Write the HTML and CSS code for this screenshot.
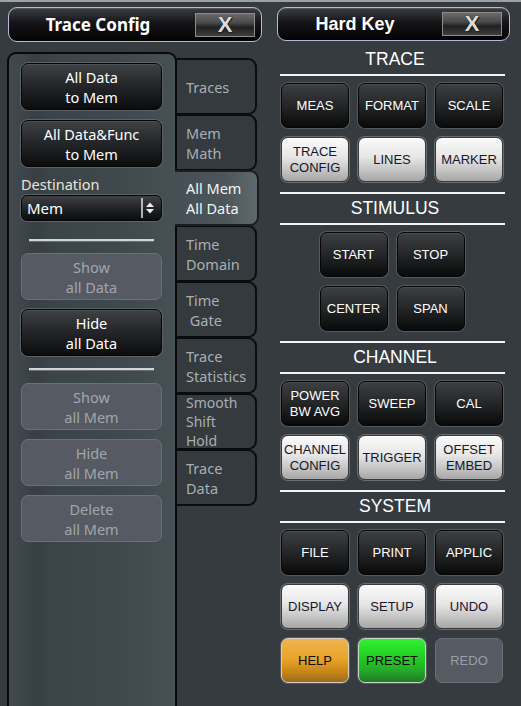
FILE: index.html
```html
<!DOCTYPE html>
<html>
<head>
<meta charset="utf-8">
<link rel="stylesheet" href="styles.css">
</head>
<body>
<div class="app">
  <div class="left">
    <div class="titlebar tb-left">
      <span class="title title-left">Trace Config</span>
      <span class="close">X</span>
    </div>
    <div class="lbody">
      <div class="panel">
        <div class="pbtn">All Data<br>to Mem</div>
        <div class="pbtn gap10">All Data&amp;Func<br>to Mem</div>
        <div class="label">Destination</div>
        <div class="select">
          <span class="sel-val">Mem</span>
          <svg class="sel-arrows" width="18" height="22" viewBox="0 0 18 22">
            <line x1="1" y1="1" x2="1" y2="21" stroke="#e4e4e4" stroke-width="1.5"/>
            <path d="M5 10 L9 5.5 L13 10 Z" fill="#ececec"/>
            <path d="M5 12 L9 16.5 L13 12 Z" fill="#ececec"/>
          </svg>
        </div>
        <div class="sep sep1"></div>
        <div class="pbtn disabled gap12">Show<br>all Data</div>
        <div class="pbtn gap9">Hide<br>all Data</div>
        <div class="sep sep2"></div>
        <div class="pbtn disabled gap13">Show<br>all Mem</div>
        <div class="pbtn disabled gap9">Hide<br>all Mem</div>
        <div class="pbtn disabled gap9">Delete<br>all Mem</div>
      </div>
      <div class="tabs">
        <div class="tab">Traces</div>
        <div class="tab">Mem<br>Math</div>
        <div class="tab selected">All Mem<br>All Data</div>
        <div class="tab">Time<br>Domain</div>
        <div class="tab">Time<br>&nbsp;Gate</div>
        <div class="tab">Trace<br>Statistics</div>
        <div class="tab three">Smooth<br>Shift<br>Hold</div>
        <div class="tab">Trace<br>Data</div>
      </div>
    </div>
  </div>

  <div class="right">
    <div class="titlebar tb-right">
      <span class="title title-right">Hard Key</span>
      <span class="close close-right">X</span>
    </div>

    <div class="heading first">TRACE</div>
    <div class="rule"></div>
    <div class="grid g3">
      <div class="key dark">MEAS</div>
      <div class="key dark">FORMAT</div>
      <div class="key dark">SCALE</div>
      <div class="key light">TRACE<br>CONFIG</div>
      <div class="key light">LINES</div>
      <div class="key light">MARKER</div>
    </div>

    <div class="rule"></div>
    <div class="heading">STIMULUS</div>
    <div class="rule"></div>
    <div class="grid g2">
      <div class="key dark">START</div>
      <div class="key dark">STOP</div>
      <div class="key dark">CENTER</div>
      <div class="key dark">SPAN</div>
    </div>

    <div class="rule"></div>
    <div class="heading">CHANNEL</div>
    <div class="rule"></div>
    <div class="grid g3">
      <div class="key dark">POWER<br>BW AVG</div>
      <div class="key dark">SWEEP</div>
      <div class="key dark">CAL</div>
      <div class="key light">CHANNEL<br>CONFIG</div>
      <div class="key light">TRIGGER</div>
      <div class="key light">OFFSET<br>EMBED</div>
    </div>

    <div class="rule"></div>
    <div class="heading">SYSTEM</div>
    <div class="rule"></div>
    <div class="grid g3">
      <div class="key dark">FILE</div>
      <div class="key dark">PRINT</div>
      <div class="key dark">APPLIC</div>
      <div class="key light">DISPLAY</div>
      <div class="key light">SETUP</div>
      <div class="key light">UNDO</div>
      <div class="key help">HELP</div>
      <div class="key preset">PRESET</div>
      <div class="key off">REDO</div>
    </div>
  </div>
</div>
</body>
</html>
```

FILE: styles.css
```css
html, body {
  margin: 0;
  padding: 0;
}

body {
  width: 521px;
  height: 706px;
  overflow: hidden;
  background: #363b40;
  font-family: "Liberation Sans", Arial, sans-serif;
}

.app {
  display: flex;
  border-top: 2px solid #9ea2a6;
  height: 704px;
  box-sizing: border-box;
}

/* ---------- title bars ---------- */
.titlebar {
  display: flex;
  align-items: center;
  box-sizing: border-box;
  margin-top: 5px;
  border: 1px solid #b8b8dc;
  border-radius: 9px;
  background: linear-gradient(#3c3e43 0%, #151518 45%, #020202 100%);
  box-shadow: inset 0 1px 0 rgba(255,255,255,0.12);
}

.tb-left {
  margin-left: 8px;
  width: 254px;
  height: 35px;
}

.tb-right {
  width: 233px;
  height: 34px;
}

.title {
  flex: 1;
  text-align: center;
  color: #ffffff;
  font-weight: bold;
}

.title-left {
  font-family: "Noto Sans", "Open Sans", sans-serif;
  font-size: 17px;
  padding-right: 8px;
}

.title-right {
  font-family: "Liberation Sans", Arial, sans-serif;
  font-size: 18px;
  padding-right: 10px;
}

.close {
  width: 60px;
  height: 24px;
  margin-right: 6px;
  box-sizing: border-box;
  border: 1px solid #8c8c8c;
  background: linear-gradient(#6a6a6a 0%, #4a4a4a 40%, #202020 60%, #3e3e3e 100%);
  color: #dcdcdc;
  font: bold 22px/22px "Liberation Sans", Arial, sans-serif;
  text-align: center;
  text-shadow: 0 0 1px #000, 1px 1px 0 #222;
}

.close-right {
  margin-right: 7px;
}

/* ---------- left side ---------- */
.left {
  width: 277px;
  flex: none;
}

.lbody {
  display: flex;
  margin-top: 10px;
  margin-left: 7px;
  height: 660px;
}

.panel {
  width: 170px;
  box-sizing: border-box;
  border: 2px solid #07090a;
  border-bottom: none;
  border-radius: 9px 9px 0 0;
  padding: 9px 0 0 12px;
  background: linear-gradient(90deg, #414a4e 0%, #3d454a 9%, #373f45 15%, #3b4449 26%, #3f484c 65%, #465055 100%);
  font-family: "Noto Sans", "Open Sans", sans-serif;
  position: relative;
  z-index: 1;
}

.pbtn {
  width: 141px;
  height: 47px;
  box-sizing: border-box;
  border: 1px solid #060606;
  border-radius: 7px;
  box-shadow: 0 0 0 1px #5c6266, inset 0 1px 0 rgba(255,255,255,0.08);
  background: linear-gradient(#3f4245 0%, #25272a 45%, #0c0c0d 100%);
  color: #ffffff;
  font-size: 14.5px;
  line-height: 20px;
  display: flex;
  align-items: center;
  justify-content: center;
  text-align: center;
}

.pbtn.disabled {
  background: #565a63;
  border: 1px solid #6b6f77;
  box-shadow: none;
  color: #a2a6ac;
}

.gap9 { margin-top: 9px; }
.gap10 { margin-top: 10px; }
.gap12 { margin-top: 12px; }
.gap13 { margin-top: 13px; }

.label {
  margin-top: 6px;
  height: 22px;
  line-height: 22px;
  color: #ece6d6;
  font-size: 14.5px;
}

.select {
  width: 141px;
  height: 26px;
  box-sizing: border-box;
  border: 1px solid #060606;
  border-radius: 6px;
  box-shadow: 0 0 0 1px #5c6266;
  background: linear-gradient(#3f4245 0%, #222427 50%, #0c0c0d 100%);
  display: flex;
  align-items: center;
  color: #ffffff;
  font-size: 15px;
}

.sel-val {
  flex: 1;
  padding-left: 5px;
}

.sel-arrows {
  margin-right: 2px;
}

.sep {
  width: 125px;
  height: 2px;
  margin-left: 8px;
  background: #d2d4d6;
  box-shadow: 0 1px 0 #6a6e72;
}

.sep1 { margin-top: 18px; }
.sep2 { margin-top: 12px; }

.tabs {
  width: 84px;
  padding-top: 6px;
  font-family: "Noto Sans", "Open Sans", sans-serif;
}

.tab {
  width: 80px;
  height: 57px;
  margin-top: -1px;
  box-sizing: border-box;
  border: 2px solid #0a0c0d;
  border-left: none;
  border-radius: 0 9px 9px 0;
  background: #343a3e;
  color: #a8b0b4;
  font-size: 14.5px;
  line-height: 20px;
  padding-left: 9px;
  display: flex;
  align-items: center;
}

.tab.three {
  font-size: 14px;
  line-height: 19.2px;
}

.tab:first-child {
  margin-top: 0;
}

.tab.selected {
  width: 84px;
  margin-left: -2px;
  padding-left: 11px;
  height: 56px;
  position: relative;
  z-index: 2;
  border-color: #1a1e20;
  background: linear-gradient(90deg, #465054 0%, #4c565a 60%, #5f686c 100%);
  color: #f4f4f4;
}

/* ---------- right side ---------- */
.right {
  width: 233px;
  flex: none;
}

.heading {
  height: 29px;
  line-height: 29px;
  text-align: center;
  color: #ffffff;
  font-size: 17.5px;
  padding-left: 3px;
}

.heading.first {
  margin-top: 4px;
}

.rule {
  height: 2px;
  margin: 0 5px 0 3px;
  background: #f4f4f4;
}

.grid {
  display: grid;
  gap: 9px;
  margin: 7px 7px 10px 4px;
  grid-auto-rows: 45px;
}

.g3 {
  grid-template-columns: repeat(3, 68px);
}

.g2 {
  grid-template-columns: repeat(2, 68px);
  justify-content: center;
}

.key {
  box-sizing: border-box;
  border-radius: 7px;
  display: flex;
  align-items: center;
  justify-content: center;
  text-align: center;
  font-size: 13px;
  line-height: 16px;
}

.key.dark {
  border: 1px solid #050505;
  box-shadow: 0 0 0 1px #55595c, inset 0 1px 0 rgba(255,255,255,0.08);
  background: linear-gradient(#3d3f42 0%, #26282a 45%, #0a0a0a 100%);
  color: #ffffff;
}

.key.light {
  border: 1px solid #3a3a3a;
  box-shadow: 0 0 0 1px #6a6e72, inset 0 1px 0 #ffffff;
  background: linear-gradient(#fafafa 0%, #e6e6e6 45%, #c4c4c4 75%, #a6a6a6 100%);
  color: #16162c;
}

.key.help {
  border: 1px solid #d8cfc2;
  box-shadow: 0 0 0 1px #55595c;
  background: linear-gradient(#eeb450 0%, #e9a42a 45%, #c88818 75%, #9a6a1c 100%);
  color: #0c0c0c;
}

.key.preset {
  border: 1px solid #c8d8c8;
  box-shadow: 0 0 0 1px #55595c;
  background: linear-gradient(#34f034 0%, #22d022 40%, #24a82a 75%, #1e7a26 100%);
  color: #0c0c0c;
}

.key.off {
  border: 1px solid #6a6e76;
  background: #555a63;
  color: #9a9ea6;
}
```
